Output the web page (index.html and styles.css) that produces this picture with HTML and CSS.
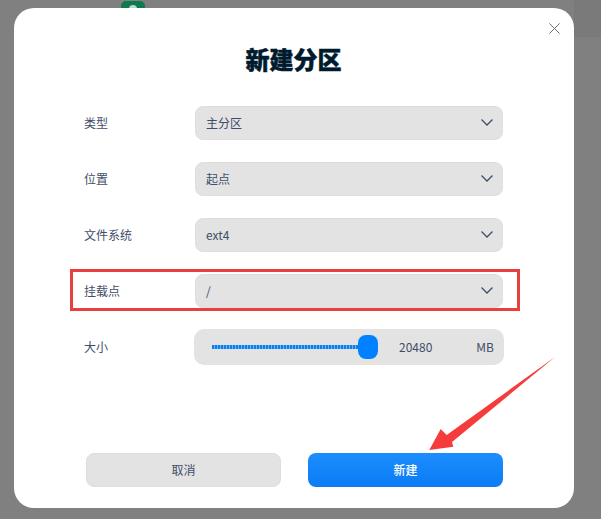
FILE: index.html
```html
<!DOCTYPE html>
<html lang="zh-CN">

<head>
	<meta charset="UTF-8">
	<title>新建分区</title>
	<link rel="stylesheet" href="styles.css">
</head>

<body>
	<div class="backdrop">
		<div class="app-icon"></div>
		<div class="top-strip"></div>

		<div class="dialog">
			<button class="close">
				<svg width="11" height="11" viewBox="0 0 11 11"><path d="M.4.4l10.2 10.2M10.6.4L.4 10.6" fill="none" stroke="#6a6f7d" stroke-width="1"/></svg>
			</button>
			<h1 class="title">新建分区</h1>

			<div class="form">
				<div class="row">
					<label>类型</label>
					<div class="select"><span>主分区</span><svg class="chevron" width="12" height="7" viewBox="0 0 12 7"><path d="M.5.5L6 6l5.5-5.5" /></svg></div>
				</div>
				<div class="row">
					<label>位置</label>
					<div class="select"><span>起点</span><svg class="chevron" width="12" height="7" viewBox="0 0 12 7"><path d="M.5.5L6 6l5.5-5.5" /></svg></div>
				</div>
				<div class="row">
					<label>文件系统</label>
					<div class="select"><span>ext4</span><svg class="chevron" width="12" height="7" viewBox="0 0 12 7"><path d="M.5.5L6 6l5.5-5.5" /></svg></div>
				</div>
				<div class="row">
					<label>挂载点</label>
					<div class="select"><span>/</span><svg class="chevron" width="12" height="7" viewBox="0 0 12 7"><path d="M.5.5L6 6l5.5-5.5" /></svg></div>
				</div>
				<div class="row">
					<label>大小</label>
					<div class="size-box">
						<div class="track"><div class="thumb"></div></div>
						<span class="size-value">20480</span>
						<span class="size-unit">MB</span>
					</div>
				</div>
			</div>

			<div class="actions">
				<button class="btn">取消</button>
				<button class="btn primary">新建</button>
			</div>
		</div>

		<div class="highlight"></div>
		<svg class="arrow" width="135" height="105" viewBox="0 0 135 105">
			<path d="M130 6L27 91l1.3 4.7L4.3 99l11.4-21 6 6z" fill="#f63b3b" />
		</svg>
	</div>
</body>

</html>
```

FILE: styles.css
```css
* {
	box-sizing: border-box;
}

html,
body {
	margin: 0;
	padding: 0;
}

body {
	font-family: "Noto Sans CJK SC", "Noto Sans", sans-serif;
	color: #414d68;
}

.backdrop {
	position: relative;
	width: 601px;
	height: 519px;
	padding: 8px 27px 11px 14px;
	background-color: #808080;
	overflow: hidden;
}

.app-icon {
	position: absolute;
	left: 121px;
	top: 1px;
	width: 24px;
	height: 24px;
	border-radius: 5px;
	background-color: #0f7a4d;
}

.app-icon::after {
	content: "";
	position: absolute;
	left: 8px;
	top: 4px;
	width: 8px;
	height: 8px;
	border-radius: 50%;
	background-color: #b9d8c8;
}

.top-strip {
	position: absolute;
	right: 0;
	top: 0;
	width: 27px;
	height: 37px;
	background-color: #7a7a7a;
}

.dialog {
	position: relative;
	display: flex;
	flex-direction: column;
	height: 500px;
	padding: 0 71px 21px 70px;
	background-color: #fff;
	border-radius: 20px;
}

.close {
	position: absolute;
	right: 14px;
	top: 15px;
	display: flex;
	padding: 0;
	border: 0;
	background: none;
}

.title {
	margin: 33px 0 29px;
	font-size: 24px;
	line-height: 36px;
	font-weight: 900;
	text-align: center;
	color: #001a2e;
	-webkit-text-stroke: 0.5px #001a2e;
}

.form {
	display: flex;
	flex-direction: column;
	gap: 22px;
}

.row {
	display: flex;
	align-items: center;
	height: 34px;
}

.row label {
	flex: none;
	width: 111px;
	padding-bottom: 2px;
	font-size: 12px;
}

.select {
	display: flex;
	align-items: center;
	justify-content: space-between;
	width: 308px;
	height: 34px;
	padding: 0 9px 2px 10px;
	background-color: #e3e3e3;
	border: 1px solid #dedede;
	border-radius: 8px;
	font-size: 12px;
}

.chevron path {
	fill: none;
	stroke: #414d68;
	stroke-width: 1.3;
}

.size-box {
	display: flex;
	align-items: center;
	flex: none;
	width: 310px;
	height: 36px;
	margin-left: -1px;
	padding: 0 10px 0 18px;
	background-color: #e3e3e3;
	border-radius: 10px;
	font-size: 12px;
}

.size-box span {
	padding-bottom: 2px;
}

.track {
	position: relative;
	width: 156px;
	height: 4px;
	background: repeating-linear-gradient(90deg, #0a7ff0 0 2px, #6fb2f2 2px 3px);
}

.thumb {
	position: absolute;
	right: -10px;
	top: -10px;
	width: 20px;
	height: 24px;
	background-color: #0081ff;
	border-radius: 8px;
}

.size-value {
	margin-left: 31px;
}

.size-unit {
	margin-left: auto;
}

.actions {
	display: flex;
	justify-content: space-between;
	margin-top: auto;
	padding-left: 2px;
}

.btn {
	width: 195px;
	height: 34px;
	padding: 0 0 2px;
	border: 1px solid #dedede;
	border-radius: 8px;
	background-color: #e3e3e3;
	font-family: inherit;
	font-size: 12px;
	color: #414d68;
}

.primary {
	border: 0;
	background: linear-gradient(180deg, #1c8dfd, #0a7cf5);
	color: #fff;
	font-weight: 500;
}

.highlight {
	position: absolute;
	left: 70px;
	top: 269px;
	width: 450px;
	height: 42px;
	border: 3px solid #e8403f;
}

.arrow {
	position: absolute;
	left: 425px;
	top: 351px;
}
```
